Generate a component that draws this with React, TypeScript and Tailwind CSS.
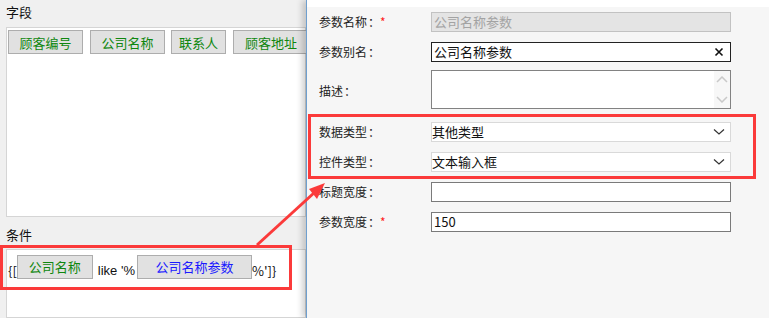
import React from "react";

const font = { fontFamily: '"Noto Sans CJK SC", "Noto Sans", sans-serif' };

function FieldBtn({ label, w, blue }: { label: string; w: string; blue?: boolean }) {
  return (
    <div
      className={`flex h-[24px] ${w} shrink-0 items-center justify-center border border-[#adadad] bg-[#e1e1e1] text-[13px] leading-none ${blue ? "text-[#1a1aff]" : "text-[#0f870f]"}`}
    >
      {label}
    </div>
  );
}

function Label({ text, required }: { text: string; required?: boolean }) {
  return (
    <div className="flex w-[112px] shrink-0 items-center text-[12px] text-[#222]">
      {text}
      <span className="ml-[1px]">：</span>
      {required && <span className="text-[#ff2020]">*</span>}
    </div>
  );
}

function Chevron() {
  return (
    <svg width="12" height="8" viewBox="0 0 12 8" className="mr-[5px]">
      <path d="M1 1.5 L6 6 L11 1.5" fill="none" stroke="#333" strokeWidth="1.2" />
    </svg>
  );
}

export default function App() {
  return (
    <div className="relative flex h-[318px] w-[769px] overflow-hidden bg-[#f0f0f0]" style={font}>
      {/* left side */}
      <div className="flex w-[306px] shrink-0 flex-col">
        <div className="h-[27px] pl-[6px] pt-[3px] text-[13px] leading-[18px] text-[#111]">字段</div>
        <div className="ml-[6px] flex h-[190px] border border-[#d5d5d5] bg-white pl-[1px] pt-[2px]">
          <FieldBtn label="顾客编号" w="w-[75px]" />
          <div className="w-[7px] shrink-0" />
          <FieldBtn label="公司名称" w="w-[75px]" />
          <div className="w-[6px] shrink-0" />
          <FieldBtn label="联系人" w="w-[55px]" />
          <div className="w-[7px] shrink-0" />
          <FieldBtn label="顾客地址" w="w-[76px]" />
        </div>
        <div className="h-[32px] pl-[6px] pt-[9px] text-[13px] leading-[18px] text-[#111]">条件</div>
        <div className="ml-[6px] flex-1 border border-[#d5d5d5] bg-white pt-[3px]">
          <div className="flex items-center text-[13px] text-[#111]">
            <span className="mt-[8px] pl-[1px]">{"{["}</span>
            <FieldBtn label="公司名称" w="w-[76px]" />
            <span className="mt-[8px] pl-[5px] pr-[2px] font-['Liberation_Sans']">like '%</span>
            <FieldBtn label="公司名称参数" w="w-[115px]" blue />
            <span className="mt-[8px]">{"%']}"}</span>
          </div>
        </div>
      </div>

      {/* right dialog panel */}
      <div className="flex flex-1 flex-col border-l border-[#6e9fcf] bg-[#f6f6f6] shadow-[-4px_0_6px_rgba(0,0,0,0.18)]">
        <div className="h-[7px] bg-white" />
        <div className="flex flex-col pl-[12px]">
          <div className="mt-[5px] flex h-[20px]">
            <Label text="参数名称" required />
            <div className="flex h-full w-[300px] items-center border border-[#c2c2c2] bg-[#e4e4e4] pl-[2px] text-[13px] text-[#a3a3a3]">
              公司名称参数
            </div>
          </div>
          <div className="mt-[10px] flex h-[20px]">
            <Label text="参数别名" />
            <div className="flex h-full w-[300px] items-center justify-between border border-[#222] bg-white pl-[2px] text-[13px] text-[#111]">
              公司名称参数
              <svg width="10" height="10" viewBox="0 0 10 10" className="mr-[6px]">
                <path d="M1.5 1.5 L8.5 8.5 M8.5 1.5 L1.5 8.5" stroke="#111" strokeWidth="1.6" />
              </svg>
            </div>
          </div>
          <div className="mt-[8px] flex h-[39px]">
            <div className="flex pt-[3px]">
              <Label text="描述" />
            </div>
            <div className="flex h-full w-[300px] justify-end border border-[#828282] bg-white">
              <div className="flex w-[16px] flex-col items-center justify-between bg-[#f7f7f7] py-[5px]">
                <svg width="12" height="7" viewBox="0 0 12 7">
                  <path d="M1 6 L6 1 L11 6" fill="none" stroke="#c9c9c9" strokeWidth="1.5" />
                </svg>
                <svg width="12" height="7" viewBox="0 0 12 7">
                  <path d="M1 1 L6 6 L11 1" fill="none" stroke="#c9c9c9" strokeWidth="1.5" />
                </svg>
              </div>
            </div>
          </div>
          <div className="mt-[13px] flex h-[20px]">
            <Label text="数据类型" />
            <div className="flex h-full w-[300px] items-center justify-between border border-[#d9d9d9] bg-white text-[13px] text-[#111]">
              其他类型
              <Chevron />
            </div>
          </div>
          <div className="mt-[10px] flex h-[20px]">
            <Label text="控件类型" />
            <div className="flex h-full w-[300px] items-center justify-between border border-[#d9d9d9] bg-white text-[13px] text-[#111]">
              文本输入框
              <Chevron />
            </div>
          </div>
          <div className="mt-[10px] flex h-[20px]">
            <Label text="标题宽度" />
            <div className="h-full w-[300px] border border-[#7a7a7a] bg-white" />
          </div>
          <div className="mt-[10px] flex h-[20px]">
            <Label text="参数宽度" required />
            <div className="flex h-full w-[300px] items-center border border-[#7a7a7a] bg-white pl-[2px] text-[13px] text-[#111]">
              150
            </div>
          </div>
        </div>
      </div>

      {/* annotations */}
      <div className="pointer-events-none absolute left-0 top-[245px] h-[45px] w-[292px] border-[3px] border-[#fb3a3a]" />
      <div className="pointer-events-none absolute left-[308px] top-[114px] h-[65px] w-[448px] border-[3px] border-[#fb3a3a]" />
      <svg className="pointer-events-none absolute left-0 top-0" width="769" height="318">
        <line x1="257" y1="245" x2="315" y2="192" stroke="#fb3a3a" strokeWidth="3" />
        <polygon points="325,183 309,189 317,199" fill="#fb3a3a" />
      </svg>
    </div>
  );
}
